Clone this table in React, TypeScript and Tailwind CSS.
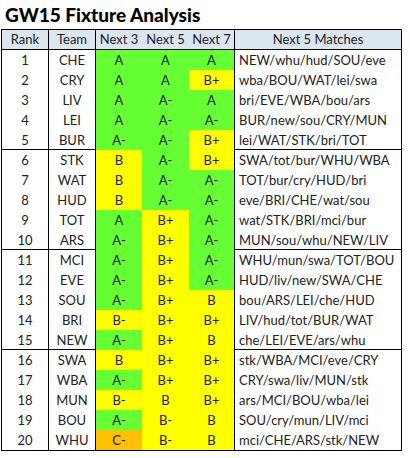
const G = "bg-[#66ff33]";
const Y = "bg-[#ffff00]";
const O = "bg-[#ffc000]";

type Grade = [string, string];

const rows: { team: string; grades: Grade[]; matches: string }[] = [
  { team: "CHE", grades: [["A", G], ["A", G], ["A", G]], matches: "NEW/whu/hud/SOU/eve" },
  { team: "CRY", grades: [["A", G], ["A", G], ["B+", Y]], matches: "wba/BOU/WAT/lei/swa" },
  { team: "LIV", grades: [["A", G], ["A-", G], ["A", G]], matches: "bri/EVE/WBA/bou/ars" },
  { team: "LEI", grades: [["A", G], ["A-", G], ["A-", G]], matches: "BUR/new/sou/CRY/MUN" },
  { team: "BUR", grades: [["A-", G], ["A-", G], ["B+", Y]], matches: "lei/WAT/STK/bri/TOT" },
  { team: "STK", grades: [["B", Y], ["A-", G], ["B+", Y]], matches: "SWA/tot/bur/WHU/WBA" },
  { team: "WAT", grades: [["B", Y], ["A-", G], ["A-", G]], matches: "TOT/bur/cry/HUD/bri" },
  { team: "HUD", grades: [["B", Y], ["A-", G], ["A-", G]], matches: "eve/BRI/CHE/wat/sou" },
  { team: "TOT", grades: [["A", G], ["B+", Y], ["A-", G]], matches: "wat/STK/BRI/mci/bur" },
  { team: "ARS", grades: [["A-", G], ["B+", Y], ["A-", G]], matches: "MUN/sou/whu/NEW/LIV" },
  { team: "MCI", grades: [["A-", G], ["B+", Y], ["A-", G]], matches: "WHU/mun/swa/TOT/BOU" },
  { team: "EVE", grades: [["A-", G], ["B+", Y], ["A-", G]], matches: "HUD/liv/new/SWA/CHE" },
  { team: "SOU", grades: [["A-", G], ["B+", Y], ["B", Y]], matches: "bou/ARS/LEI/che/HUD" },
  { team: "BRI", grades: [["B-", Y], ["B+", Y], ["B+", Y]], matches: "LIV/hud/tot/BUR/WAT" },
  { team: "NEW", grades: [["A-", G], ["B+", Y], ["B", Y]], matches: "che/LEI/EVE/ars/whu" },
  { team: "SWA", grades: [["B", Y], ["B+", Y], ["B+", Y]], matches: "stk/WBA/MCI/eve/CRY" },
  { team: "WBA", grades: [["A-", G], ["B+", Y], ["B+", Y]], matches: "CRY/swa/liv/MUN/stk" },
  { team: "MUN", grades: [["B-", Y], ["B", Y], ["B+", Y]], matches: "ars/MCI/BOU/wba/lei" },
  { team: "BOU", grades: [["A-", G], ["B-", Y], ["B", Y]], matches: "SOU/cry/mun/LIV/mci" },
  { team: "WHU", grades: [["C-", O], ["B-", Y], ["B", Y]], matches: "mci/CHE/ARS/stk/NEW" },
];

export default function App() {
  return (
    <div className="w-[410px] h-[458px] bg-white text-[#222] font-['Lato',sans-serif]">
      {/* title */}
      <div className="h-[29px] pl-[5px] pt-[3px] text-[19px] leading-[24px] font-black text-black">
        GW15 Fixture Analysis
      </div>

      <div className="ml-[1px] w-[401px] border border-black text-[13px]">
        {/* header */}
        <div className="grid grid-cols-[47px_47px_46px_47px_46px_166px] h-[20px] leading-[19px] bg-[#dce6f1] border-b border-black">
          <div className="text-center border-r border-black">Rank</div>
          <div className="text-center border-r border-black">Team</div>
          <div className="text-center">Next 3</div>
          <div className="text-center">Next 5</div>
          <div className="text-center border-r border-black">Next 7</div>
          <div className="text-center">Next 5 Matches</div>
        </div>

        {rows.map((r, i) => {
          const sep = (i + 1) % 5 === 0 && i < rows.length - 1;
          return (
            <div
              key={r.team}
              className={`grid grid-cols-[47px_47px_46px_47px_46px_166px] h-[20px] leading-[20px] ${sep ? "border-b border-black leading-[19px]" : ""}`}
            >
              <div className="text-center border-r border-black">{i + 1}</div>
              <div className="text-center border-r border-black">{r.team}</div>
              {r.grades.map(([g, c], j) => (
                <div key={j} className={`text-center ${c} ${j === 2 ? "border-r border-black" : ""}`}>
                  {g}
                </div>
              ))}
              <div className="pl-[4px] whitespace-nowrap">{r.matches}</div>
            </div>
          );
        })}
      </div>
    </div>
  );
}
